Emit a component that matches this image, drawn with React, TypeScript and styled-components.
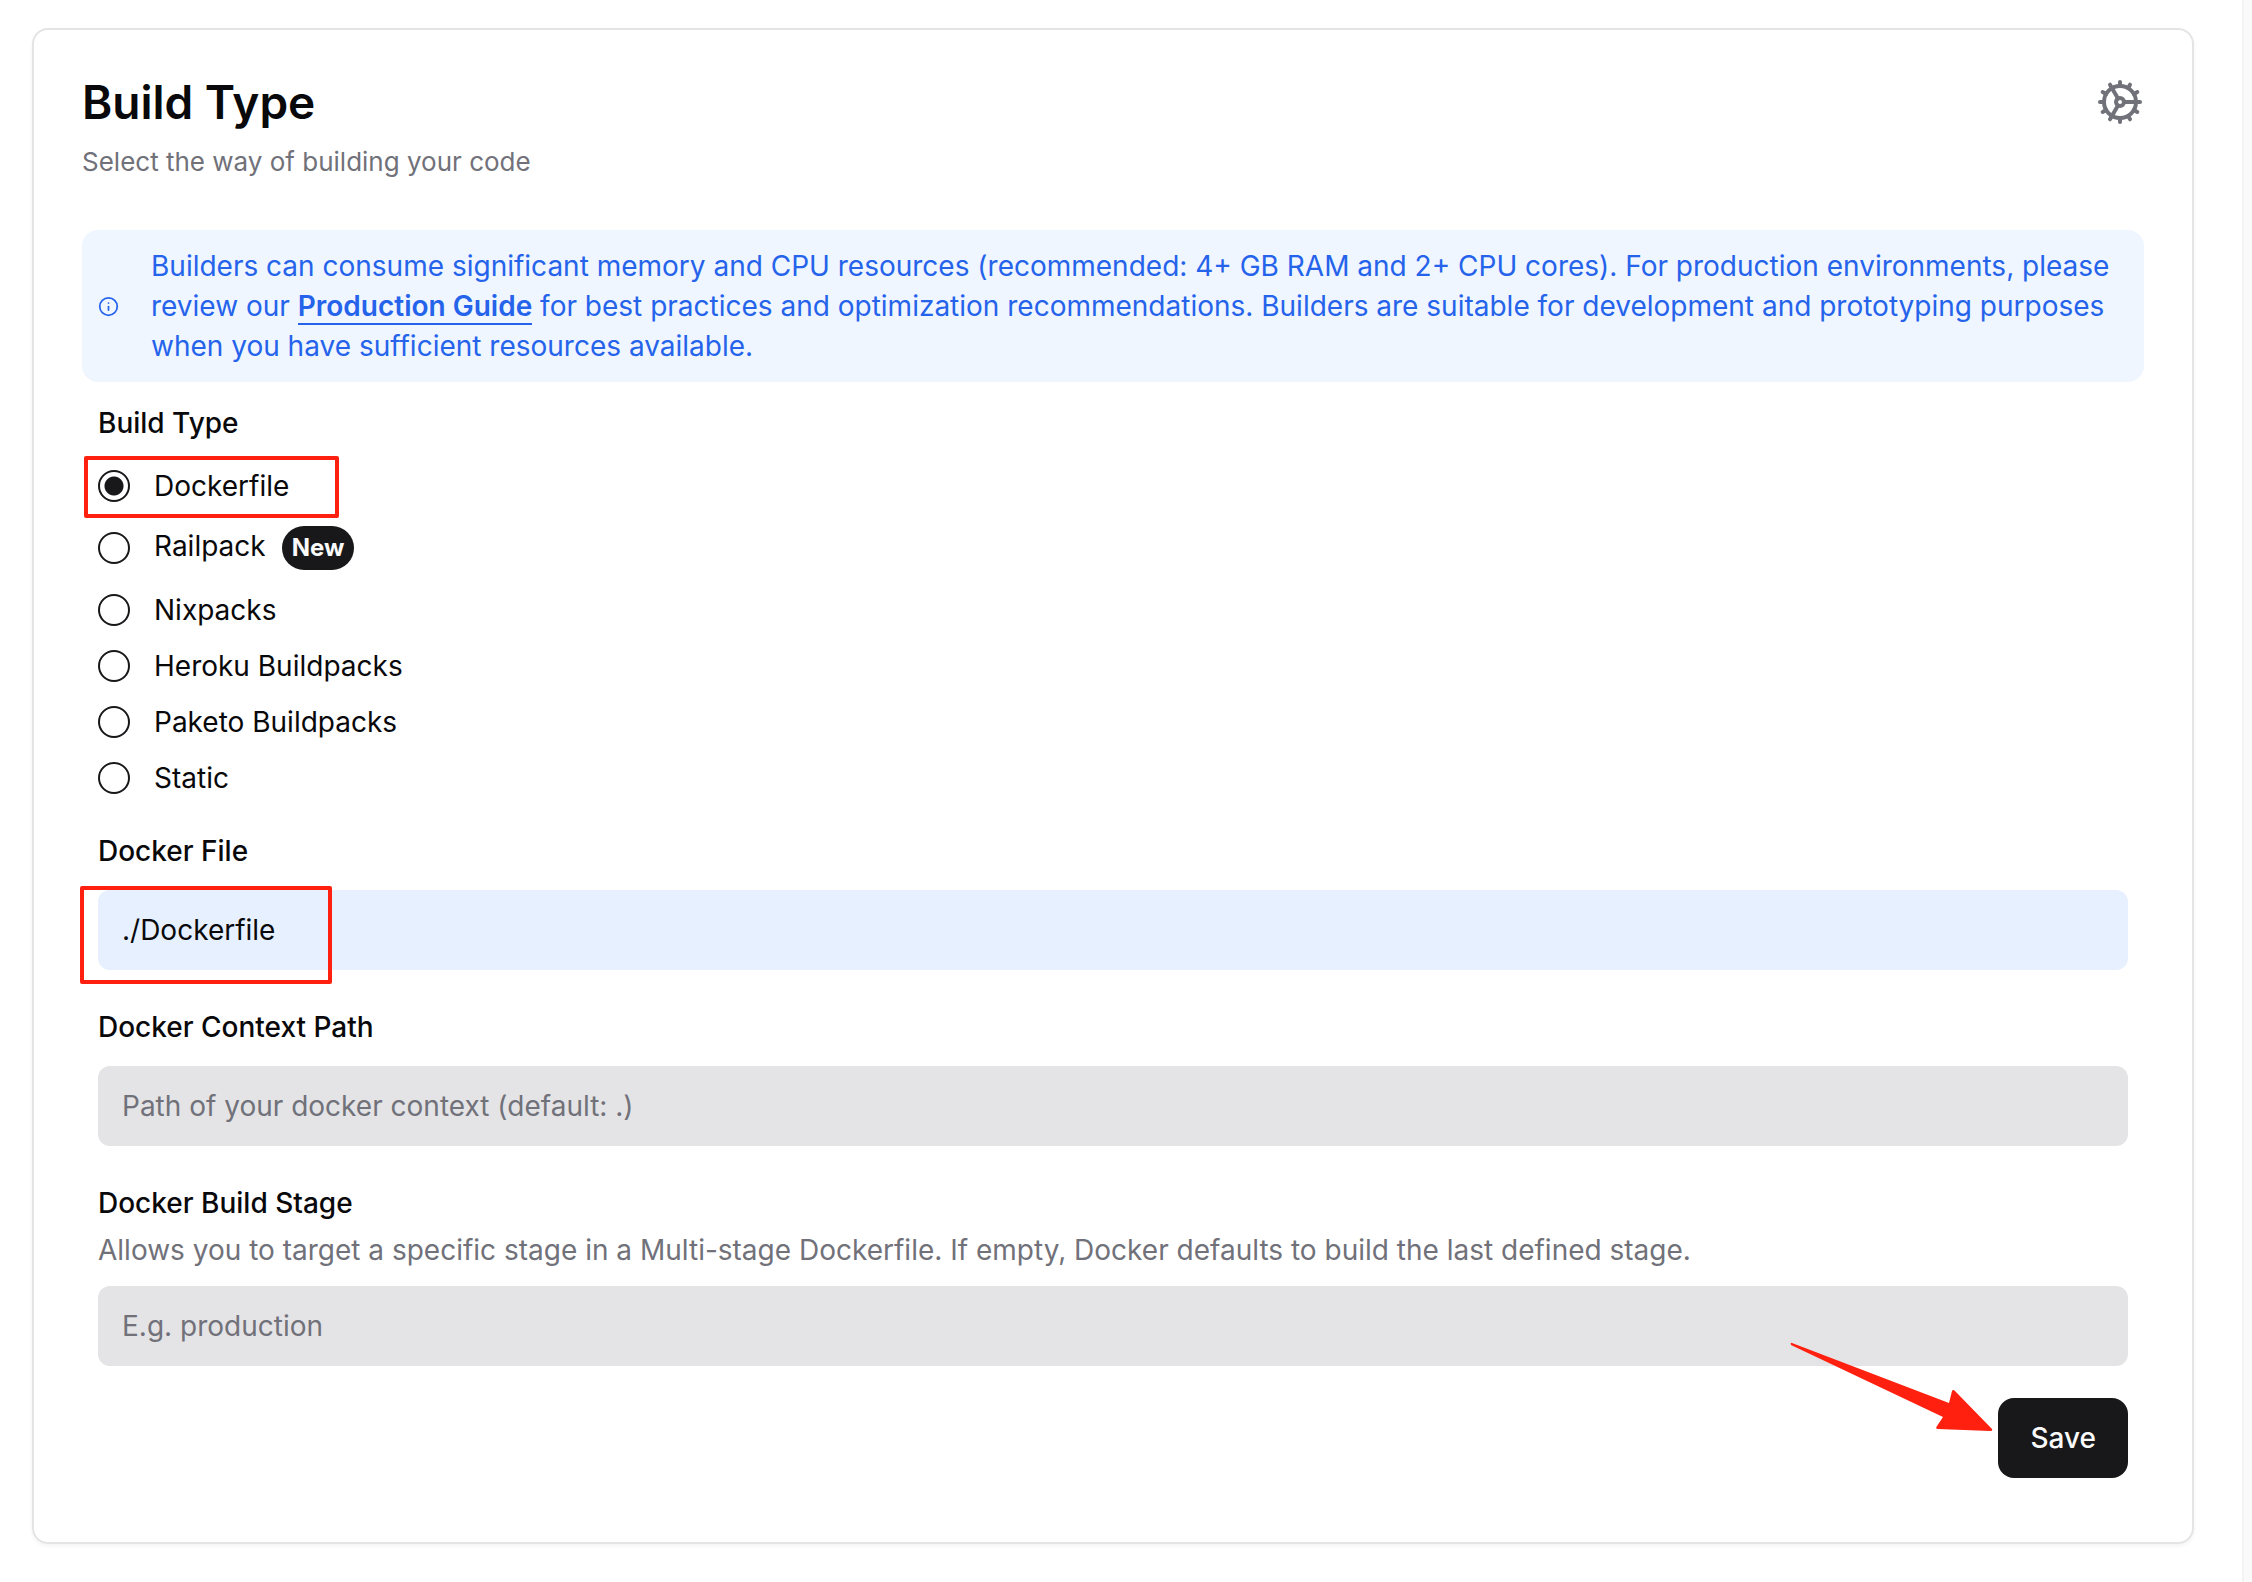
import React, { useState } from "react";
import styled, { createGlobalStyle } from "styled-components";
import { Cog, Info } from "lucide-react";

const GlobalStyle = createGlobalStyle`
  *, *::before, *::after { box-sizing: border-box; }
  body {
    margin: 0;
    background: #fafafa;
    color: #09090b;
    font-family: Inter, "Liberation Sans", sans-serif;
    font-size: 28px;
    line-height: 40px;
  }
`;

const Page = styled.main`
  min-height: 100vh;
  margin-right: 8px;
  padding: 28px 48px 38px 32px;
  background: #ffffff;
  border-right: 2px solid #f4f4f5;
`;

const Card = styled.section`
  padding: 48px;
  border: 2px solid #e4e4e7;
  border-radius: 16px;
  box-shadow: 0 2px 4px rgba(0, 0, 0, 0.05);
`;

const CardHeader = styled.header`
  display: flex;
  justify-content: space-between;
  align-items: flex-start;
  margin-bottom: 48px;
`;

const HeaderText = styled.div`
  display: flex;
  flex-direction: column;
  gap: 16px;
`;

const Title = styled.h1`
  margin: 0;
  font-size: 46px;
  line-height: 48px;
  font-weight: 600;
`;

const Muted = styled.p`
  margin: 0;
  color: #71717a;
`;

const Subtitle = styled(Muted)`
  font-size: 26px;
`;

const Notice = styled.div`
  display: flex;
  align-items: center;
  gap: 32px;
  padding: 16px;
  border-radius: 16px;
  background: #eff6ff;
  color: #2563eb;

  svg { flex: none; }
`;

const NoticeText = styled.p`
  margin: 0;
`;

const GuideLink = styled.a`
  color: inherit;
  font-weight: 600;
  text-decoration: none;
  border-bottom: 2px solid currentColor;
`;

const Form = styled.form`
  display: flex;
  flex-direction: column;
  gap: 32px;
  padding: 20px 16px 16px;
`;

const RadioGroup = styled.fieldset`
  display: flex;
  flex-direction: column;
  gap: 16px;
  margin: 0;
  padding: 0;
  border: 0;
`;

const Legend = styled.legend`
  margin-bottom: 22px;
  padding: 0;
  font-weight: 500;
  line-height: 42px;
`;

const RadioRow = styled.div<{ $tall?: boolean }>`
  position: relative;
  display: flex;
  align-items: center;
  gap: 24px;
  min-height: ${(p) => (p.$tall ? 52 : 40)}px;
`;

const Radio = styled.input`
  appearance: none;
  flex: none;
  width: 32px;
  height: 32px;
  margin: 0;
  border: 2px solid #18181b;
  border-radius: 50%;

  &:checked {
    background: radial-gradient(circle, #18181b 0 9px, transparent 10px);
  }
`;

const RadioLabel = styled.label`
  display: flex;
  align-items: flex-start;
  gap: 16px;
`;

const Badge = styled.span`
  padding: 2px 10px;
  border-radius: 22px;
  background: #18181b;
  color: #fafafa;
  font-size: 24px;
  font-weight: 700;
`;

const Fields = styled.div`
  display: flex;
  flex-direction: column;
  gap: 36px;
`;

const Field = styled.div`
  display: flex;
  flex-direction: column;
`;

const FieldLabel = styled.label`
  font-weight: 500;
  line-height: 42px;
`;

const Hint = styled(Muted)`
  margin-top: 6px;
`;

const InputWrap = styled.div<{ $gap: number }>`
  position: relative;
  margin-top: ${(p) => p.$gap}px;
`;

const TextInput = styled.input<{ $filled?: boolean }>`
  display: block;
  width: 100%;
  height: 80px;
  padding: 0 24px;
  border: 0;
  border-radius: 12px;
  background: ${(p) => (p.$filled ? "#e6f0ff" : "#e4e4e6")};
  color: #09090b;
  font: inherit;

  &::placeholder {
    color: #71717a;
    opacity: 1;
  }
`;

const Actions = styled.div`
  position: relative;
  display: flex;
  justify-content: flex-end;
`;

const SaveButton = styled.button`
  height: 80px;
  padding: 0 32px;
  border: 0;
  border-radius: 16px;
  background: #18181b;
  color: #fafafa;
  font: inherit;
  font-weight: 500;
`;

const Highlight = styled.span<{ $top: number; $left: number; $width: number; $height: number }>`
  position: absolute;
  top: ${(p) => p.$top}px;
  left: ${(p) => p.$left}px;
  width: ${(p) => p.$width}px;
  height: ${(p) => p.$height}px;
  border: 4px solid #ff2010;
  border-radius: 2px;
  pointer-events: none;
`;

const Arrow = styled.svg`
  position: absolute;
  right: 134px;
  top: -56px;
  pointer-events: none;
`;

const buildTypes = [
  { id: "dockerfile", name: "Dockerfile" },
  { id: "railpack", name: "Railpack", isNew: true },
  { id: "nixpacks", name: "Nixpacks" },
  { id: "heroku", name: "Heroku Buildpacks" },
  { id: "paketo", name: "Paketo Buildpacks" },
  { id: "static", name: "Static" },
];

export default function App() {
  const [buildType, setBuildType] = useState("dockerfile");
  const [dockerFile, setDockerFile] = useState("./Dockerfile");

  return (
    <>
      <GlobalStyle />
      <Page>
        <Card>
          <CardHeader>
            <HeaderText>
              <Title>Build Type</Title>
              <Subtitle>Select the way of building your code</Subtitle>
            </HeaderText>
            <Cog size={48} color="#71717a" aria-hidden="true" />
          </CardHeader>

          <Notice>
            <Info size={21} aria-hidden="true" />
            <NoticeText>
              Builders can consume significant memory and CPU resources (recommended: 4+ GB RAM and
              2+ CPU cores). For production environments, please review our{" "}
              <GuideLink href="#production-guide">Production Guide</GuideLink> for best practices and
              optimization recommendations. Builders are suitable for development and prototyping
              purposes when you have sufficient resources available.
            </NoticeText>
          </Notice>

          <Form onSubmit={(e) => e.preventDefault()}>
            <RadioGroup>
              <Legend>Build Type</Legend>
              {buildTypes.map((type) => (
                <RadioRow key={type.id} $tall={type.isNew}>
                  <Radio
                    type="radio"
                    name="buildType"
                    id={type.id}
                    checked={buildType === type.id}
                    onChange={() => setBuildType(type.id)}
                  />
                  <RadioLabel htmlFor={type.id}>
                    {type.name}
                    {type.isNew && <Badge>New</Badge>}
                  </RadioLabel>
                  {type.id === "dockerfile" && (
                    <Highlight $top={-10} $left={-14} $width={255} $height={62} />
                  )}
                </RadioRow>
              ))}
            </RadioGroup>

            <Fields>
              <Field>
                <FieldLabel htmlFor="docker-file">Docker File</FieldLabel>
                <InputWrap $gap={18}>
                  <TextInput
                    id="docker-file"
                    $filled
                    value={dockerFile}
                    onChange={(e) => setDockerFile(e.target.value)}
                  />
                  <Highlight $top={-4} $left={-18} $width={252} $height={98} />
                </InputWrap>
              </Field>
              <Field>
                <FieldLabel htmlFor="context-path">Docker Context Path</FieldLabel>
                <InputWrap $gap={18}>
                  <TextInput id="context-path" placeholder="Path of your docker context (default: .)" />
                </InputWrap>
              </Field>
              <Field>
                <FieldLabel htmlFor="build-stage">Docker Build Stage</FieldLabel>
                <Hint id="build-stage-hint">
                  Allows you to target a specific stage in a Multi-stage Dockerfile. If empty, Docker
                  defaults to build the last defined stage.
                </Hint>
                <InputWrap $gap={16}>
                  <TextInput
                    id="build-stage"
                    placeholder="E.g. production"
                    aria-describedby="build-stage-hint"
                  />
                </InputWrap>
              </Field>
            </Fields>

            <Actions>
              <SaveButton type="submit">Save</SaveButton>
              <Arrow width="204" height="92" viewBox="0 0 204 92" aria-hidden="true">
                <path
                  d="M2 1 L159 61 L162 49 Q163 47 165 49 L202 87 Q203 89 200 89 L148 87 Q145 87 147 84 L153 75 L1 3 Q0 0 2 1 Z"
                  fill="#ff2010"
                />
              </Arrow>
            </Actions>
          </Form>
        </Card>
      </Page>
    </>
  );
}
